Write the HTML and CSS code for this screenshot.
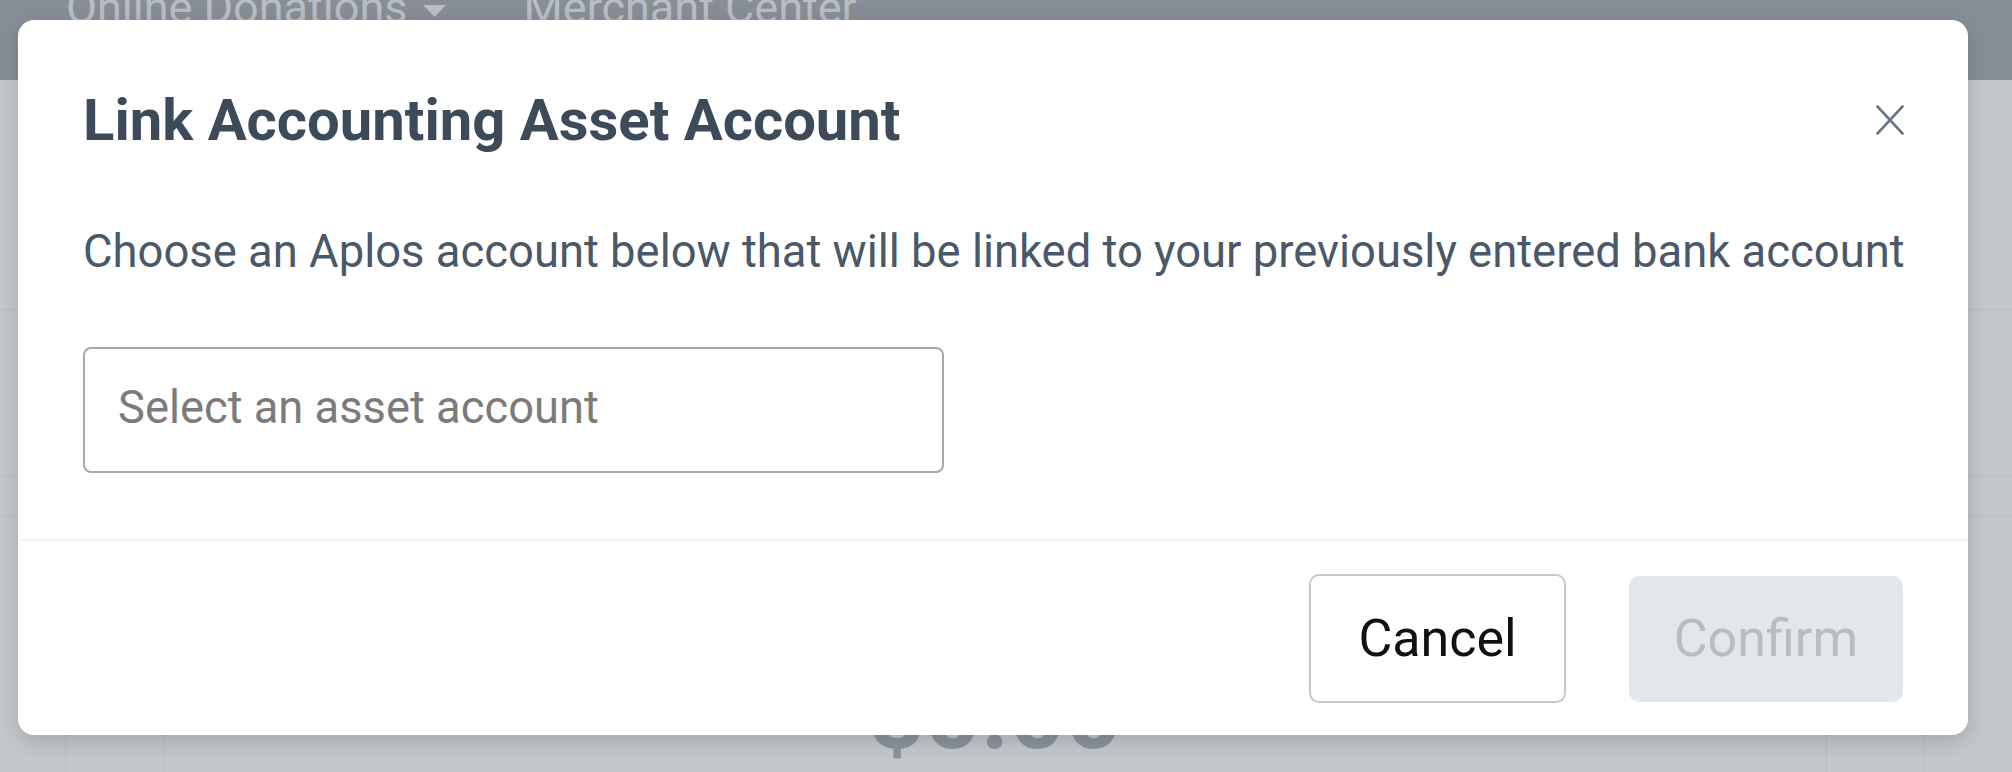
FILE: index.html
```html
<!DOCTYPE html>
<html lang="en">
<head>
  <meta charset="UTF-8" />
  <meta name="viewport" content="width=device-width, initial-scale=1.0"/>
  <title>Link Accounting Asset Account</title>
  <link rel="stylesheet" href="styles.css">
</head>
<body>

<div class="page">
  <header class="topnav">
    <span class="nav-item">Online Donations<svg class="caret" width="23" height="12" viewBox="0 0 23 12"><path d="M0 0h23L11.5 12z" fill="currentColor"/></svg></span>
    <span class="nav-item">Merchant Center</span>
  </header>
  <div class="band band-a"></div>
  <div class="band band-b"></div>
  <div class="band band-c"></div>
  <div class="summary">
    <div class="cell"></div>
    <div class="cell"></div>
    <div class="cell amount">$0.00</div>
    <div class="cell"></div>
    <div class="cell"></div>
  </div>
</div>

<div class="modal">
  <div class="modal-header">
    <h2 class="modal-title">Link Accounting Asset Account</h2>
    <button class="close" aria-label="Close">
      <svg width="28" height="30" viewBox="0 0 28 30"><path d="M1.5 1.5L26.5 28.5M26.5 1.5L1.5 28.5" stroke="currentColor" stroke-width="2.6" stroke-linecap="round"/></svg>
    </button>
  </div>
  <div class="modal-body">
    <p class="modal-text">Choose an Aplos account below that will be linked to your previously entered bank account</p>
    <div class="select">Select an asset account</div>
  </div>
  <div class="modal-footer">
    <button class="btn">Cancel</button>
    <button class="btn btn-confirm" disabled>Confirm</button>
  </div>
</div>

</body>
</html>
```

FILE: styles.css
```css
*{box-sizing:border-box;}
body{
  margin:0;height:772px;overflow:hidden;position:relative;
  font-family:Roboto,"Liberation Sans",sans-serif;
  background:#c3c8cc;
}

/* page behind the dialog */
.topnav{
  height:80px;background:#878e97;
  display:flex;align-items:flex-start;gap:78px;padding-left:66px;
}
.nav-item{
  font-size:45px;line-height:53px;color:#b8bec4;margin-top:-19px;white-space:nowrap;
}
.caret{vertical-align:middle;margin-left:15px;}
.band{border-bottom:1px solid #b8bdc2;}
.band-a{height:230px;}
.band-b{height:166px;}
.band-c{height:40px;}
.summary{
  display:grid;grid-template-columns:65px 98px 1663px 97px 1fr;height:256px;
}
.cell + .cell{border-left:1px solid #b8bdc2;}
.amount{
  text-align:center;padding-top:141px;
  font-size:98px;line-height:115px;font-weight:700;color:#8b949c;
}

/* dialog */
.modal{
  position:absolute;top:20px;left:18px;width:1950px;
  background:#fff;border-radius:16px;
  box-shadow:0 6px 20px rgba(40,50,60,.22);
}
.modal-header{
  display:flex;justify-content:space-between;align-items:center;
  padding:66px 64px 0 65px;
}
.modal-title{
  margin:0;font-size:58px;line-height:68px;font-weight:700;color:#3c4a59;
}
.close{
  background:none;border:0;padding:0;display:flex;color:#6b7885;cursor:pointer;
}
.modal-body{padding:71px 65px 66px;}
.modal-text{
  margin:0;font-size:45.4px;line-height:53px;color:#4a5969;white-space:nowrap;
}
.select{
  margin-top:69px;width:861px;height:126px;
  border:2px solid #a2aab2;border-radius:8px;padding:0 33px 6px;
  display:flex;align-items:center;
  font-size:45.3px;color:#7b7b7b;
}
.modal-footer{
  border-top:2px solid #f3f4f5;
  padding:33px 65px 32px;
  display:flex;justify-content:flex-end;align-items:center;gap:63px;
}
.btn{
  height:129px;padding:0 47px;
  font-family:inherit;font-size:52px;color:#111;
  background:#fff;border:2px solid #c3c9cf;border-radius:10px;cursor:pointer;
}
.btn-confirm{
  height:126px;padding:0 45px;border:0;
  background:#e3e7ea;color:#b6bdc4;cursor:default;
}
```
